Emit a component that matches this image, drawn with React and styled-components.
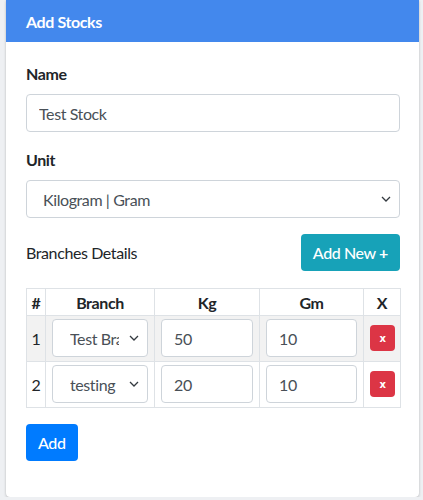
import React, {useState} from 'react';
import styled, {createGlobalStyle} from 'styled-components';

const GlobalStyle = createGlobalStyle`
  body {
    margin: 0;
    background: #eef0f3;
    font-family: Lato, "Liberation Sans", sans-serif;
    letter-spacing: -0.4px;
    color: #212529;
  }
  * { box-sizing: border-box; }
  input, select, button { letter-spacing: -0.4px; }
`

const Page = styled.div`
  padding: 0 4px 0 6px;
`

const Card = styled.div`
  width: 413px;
  background: #fff;
  border-radius: 0 0 4px 4px;
  box-shadow: 0 0 1px rgba(0,0,0,.125), 0 1px 3px rgba(0,0,0,.2);
`

const CardHeader = styled.div`
  height: 42px;
  background: #4388ed;
  color: #fff;
  font-size: 16px;
  font-weight: 700;
  display: flex;
  align-items: center;
  padding: 0 20px;
`

const CardBody = styled.div`
  padding: 20px 19px 36px 20px;
`

const FormGroup = styled.div`
  margin-bottom: 16px;
`

const Label = styled.label`
  display: block;
  font-weight: 700;
  font-size: 16px;
  line-height: 24px;
  margin-bottom: 8px;
`

const Input = styled.input`
  display: block;
  width: 100%;
  height: 38px;
  padding: 6px 12px;
  font-family: inherit;
  font-size: 16px;
  color: #495057;
  border: 1px solid #ced4da;
  border-radius: 4px;
  background: #fff;
  outline: none;
`

const Select = styled.select`
  display: block;
  width: 100%;
  height: 38px;
  padding: 6px ${p => p.$small ? '28px' : '40px'} 6px ${p => p.$small ? '17px' : '16px'};
  font-family: inherit;
  font-size: 16px;
  color: #495057;
  border: 1px solid #ced4da;
  border-radius: 4px;
  background: #fff url("data:image/svg+xml,%3Csvg xmlns='http://www.w3.org/2000/svg' width='10' height='6'%3E%3Cpath d='M1 1l4 4 4-4' fill='none' stroke='%23343a40' stroke-width='1.3'/%3E%3C/svg%3E") no-repeat right 8px center;
  appearance: none;
  outline: none;
`

const Row = styled.div`
  display: flex;
  justify-content: space-between;
  align-items: center;
  margin-bottom: 17px;
`

const RowTitle = styled.span`
  font-size: 16px;
  color: #212529;
`

const Button = styled.button`
  font-family: inherit;
  font-size: 16px;
  font-weight: 500;
  color: #fff;
  background: ${p => p.$color};
  border: none;
  border-radius: 4px;
  height: 37px;
  padding: 0 12px;
  cursor: pointer;
`

const RemoveButton = styled.button`
  width: 25px;
  height: 26px;
  background: #dc3545;
  color: #fff;
  border: none;
  border-radius: 4px;
  font-family: "DejaVu Sans", sans-serif;
  font-size: 10px;
  font-weight: 700;
  padding: 0;
  cursor: pointer;
`

const Table = styled.table`
  width: 374px;
  border-collapse: collapse;
  margin-bottom: 16px;
  table-layout: fixed;
`

const Th = styled.th`
  border: 1px solid #dee2e6;
  height: 27px;
  padding: 0;
  font-size: 16px;
  font-weight: 700;
  text-align: center;
`

const Tr = styled.tr`
  background: ${p => p.$striped ? '#f2f2f2' : '#fff'};
`

const Td = styled.td`
  border: 1px solid #dee2e6;
  padding: 3px 6px 4px;
  font-size: 16px;
  text-align: center;
  color: #212529;
`

const NumTd = styled(Td)`
  padding: 3px 0 4px;
`

export default function App() {
  const [rows] = useState([
    {id: 1, branch: 'Test Branch', kg: '50', gm: '10'},
    {id: 2, branch: 'testing branch', kg: '20', gm: '10'},
  ])

  return (
    <Page>
      <GlobalStyle />
      <Card>
        <CardHeader>Add Stocks</CardHeader>
        <CardBody>
          <FormGroup>
            <Label>Name</Label>
            <Input defaultValue="Test Stock" />
          </FormGroup>
          <FormGroup>
            <Label>Unit</Label>
            <Select defaultValue="kg">
              <option value="kg">Kilogram | Gram</option>
            </Select>
          </FormGroup>
          <Row>
            <RowTitle>Branches Details</RowTitle>
            <Button $color="#17a2b8">Add New <b>+</b></Button>
          </Row>
          <Table>
            <colgroup>
              <col style={{width: 19}} />
              <col style={{width: 109}} />
              <col style={{width: 105}} />
              <col style={{width: 104}} />
              <col style={{width: 37}} />
            </colgroup>
            <thead>
              <tr>
                <Th>#</Th>
                <Th>Branch</Th>
                <Th>Kg</Th>
                <Th>Gm</Th>
                <Th>X</Th>
              </tr>
            </thead>
            <tbody>
              {rows.map((row, i) => (
                <Tr key={row.id} $striped={i % 2 === 0}>
                  <NumTd>{row.id}</NumTd>
                  <Td>
                    <Select $small defaultValue={row.branch}>
                      <option>{row.branch}</option>
                    </Select>
                  </Td>
                  <Td><Input defaultValue={row.kg} /></Td>
                  <Td><Input defaultValue={row.gm} /></Td>
                  <Td><RemoveButton>x</RemoveButton></Td>
                </Tr>
              ))}
            </tbody>
          </Table>
          <Button $color="#007bff">Add</Button>
        </CardBody>
      </Card>
    </Page>
  )
}
